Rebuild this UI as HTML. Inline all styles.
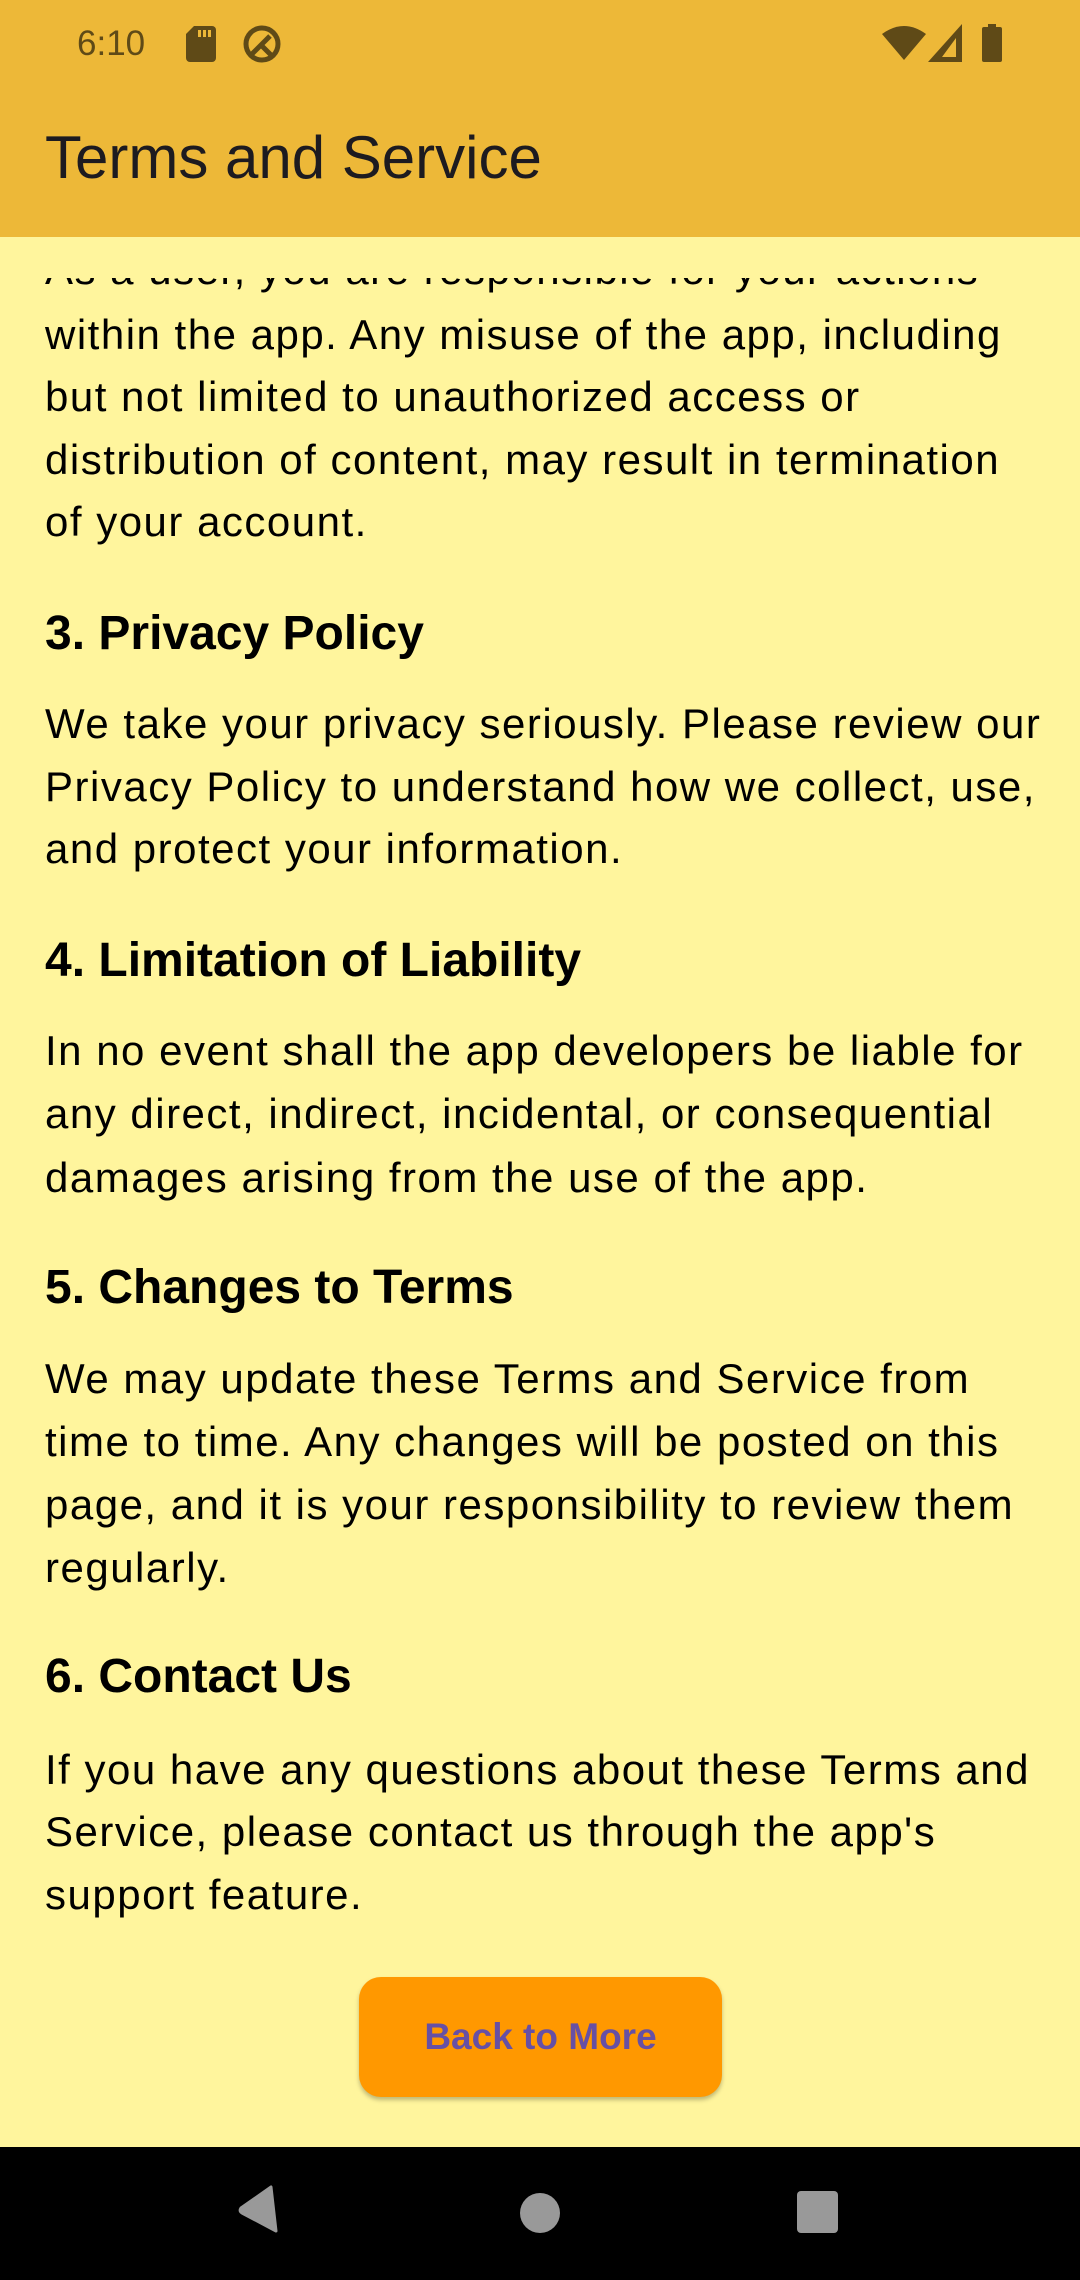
<!DOCTYPE html>
<html><head><meta charset="utf-8"><style>
*{margin:0;padding:0;box-sizing:border-box}
html,body{width:1080px;height:2280px;overflow:hidden;background:#fff59d;font-family:"Liberation Sans",Roboto,sans-serif}
#bar{position:absolute;left:0;top:0;width:1080px;height:237px;background:#edb838;z-index:2}
#cover{position:absolute;left:0;top:237px;width:1080px;height:41px;background:#fff59d;z-index:1}
.t{position:absolute;white-space:nowrap}
.p{font-size:42px;line-height:63px;color:#000;left:45px;letter-spacing:1.5px}
.h{font-size:48px;line-height:63px;font-weight:bold;color:#000;left:45px}
#nav{position:absolute;left:0;top:2147px;width:1080px;height:133px;background:#000}
</style></head><body>
<div id="bar">
  <div class="t" style="left:77px;top:22px;font-size:35px;line-height:44px;color:#5f4a17">6:10</div>
  <svg style="position:absolute;left:186px;top:26px" width="30" height="36" viewBox="0 0 30 36"><path d="M8 0H26a4 4 0 0 1 4 4V32a4 4 0 0 1-4 4H4a4 4 0 0 1-4-4V8Z" fill="#5f4a17"/><rect x="12" y="4" width="3" height="7" fill="#edb838"/><rect x="17" y="4" width="3" height="7" fill="#edb838"/><rect x="22" y="4" width="3" height="7" fill="#edb838"/></svg>
  <svg style="position:absolute;left:242px;top:24px" width="40" height="40" viewBox="0 0 40 40"><circle cx="20" cy="20" r="16" fill="none" stroke="#5f4a17" stroke-width="5"/><path d="M10 30L28 12M20 22l10 10" stroke="#5f4a17" stroke-width="5"/></svg>
  <svg style="position:absolute;left:882px;top:24px" width="44" height="36" viewBox="0 0 44 36"><path d="M0 10Q22 -6 44 10L22 36Z" fill="#5f4a17"/></svg>
  <svg style="position:absolute;left:928px;top:24px" width="34" height="38" viewBox="0 0 34 38"><path d="M34 0V38H0Z" fill="#5f4a17"/><path d="M28 14V33H14Z" fill="#edb838"/></svg>
  <svg style="position:absolute;left:982px;top:24px" width="20" height="38" viewBox="0 0 20 38"><rect x="6" y="0" width="8" height="4" fill="#5f4a17"/><rect x="0" y="3" width="20" height="35" rx="2" fill="#5f4a17"/></svg>
  <div class="t" style="left:45px;top:122px;font-size:60px;line-height:72px;color:#1d1b20">Terms and Service</div>
</div>
<div id="cover"></div>

<div class="t p" style="top:238px">As a user, you are responsible for your actions</div>
<div class="t p" style="top:303px">within the app. Any misuse of the app, including</div>
<div class="t p" style="top:365px">but not limited to unauthorized access or</div>
<div class="t p" style="top:428px">distribution of content, may result in termination</div>
<div class="t p" style="top:490px">of your account.</div>

<div class="t h" style="top:602px">3. Privacy Policy</div>
<div class="t p" style="top:692px">We take your privacy seriously. Please review our</div>
<div class="t p" style="top:755px">Privacy Policy to understand how we collect, use,</div>
<div class="t p" style="top:817px">and protect your information.</div>

<div class="t h" style="top:929px">4. Limitation of Liability</div>
<div class="t p" style="top:1019px">In no event shall the app developers be liable for</div>
<div class="t p" style="top:1082px">any direct, indirect, incidental, or consequential</div>
<div class="t p" style="top:1146px">damages arising from the use of the app.</div>

<div class="t h" style="top:1256px">5. Changes to Terms</div>
<div class="t p" style="top:1347px">We may update these Terms and Service from</div>
<div class="t p" style="top:1410px">time to time. Any changes will be posted on this</div>
<div class="t p" style="top:1473px">page, and it is your responsibility to review them</div>
<div class="t p" style="top:1536px">regularly.</div>

<div class="t h" style="top:1645px">6. Contact Us</div>
<div class="t p" style="top:1738px">If you have any questions about these Terms and</div>
<div class="t p" style="top:1800px">Service, please contact us through the app's</div>
<div class="t p" style="top:1863px">support feature.</div>

<div style="position:absolute;left:359px;top:1977px;width:363px;height:120px;background:#ff9800;border-radius:22px;box-shadow:0 3px 4px rgba(0,0,0,0.25);display:flex;align-items:center;justify-content:center;color:#6750a4;font-size:37px;font-weight:bold">Back to More</div>

<div id="nav">
  <svg style="position:absolute;left:238px;top:38px" width="46" height="48" viewBox="0 0 46 48"><path d="M33 2L38 46L4 28Q1 26 3 23Z" fill="#999" stroke="#999" stroke-width="3" stroke-linejoin="round"/></svg>
  <div style="position:absolute;left:520px;top:46px;width:40px;height:40px;border-radius:50%;background:#999"></div>
  <div style="position:absolute;left:797px;top:44px;width:41px;height:42px;border-radius:4px;background:#999"></div>
</div>
</body></html>
